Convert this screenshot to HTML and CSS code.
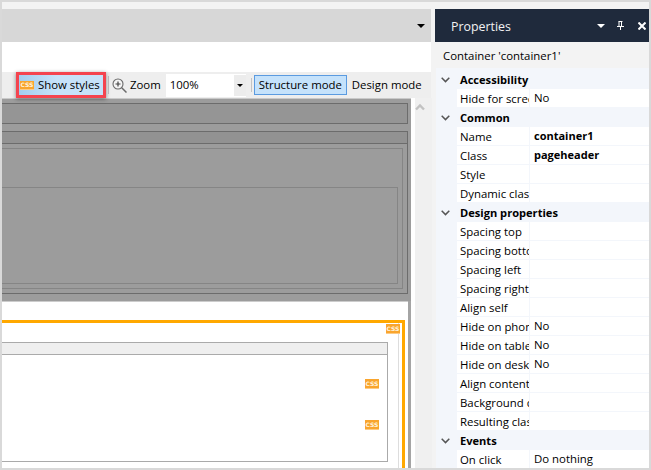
FILE: index.html
```html
<!DOCTYPE html>
<html lang="en">
<head>
<meta charset="utf-8">
<title>Show styles</title>
<link rel="stylesheet" href="styles.css">
</head>
<body>
<div class="frame">
  <main class="editor">
    <div class="strip"></div>
    <div class="tabs"><span class="caret"></span></div>
    <div class="blank"></div>
    <div class="toolbar">
      <div class="show-btn"><span class="css big">CSS</span><span class="tx">Show styles</span></div>
      <span class="sep"></span>
      <svg class="zoom-icon" width="15" height="15" viewBox="0 0 15 15"><circle cx="6" cy="6" r="5" fill="#f4f4f4" stroke="#6a6a6a" stroke-width="1.100"/><path d="M9.700 9.700 14.500 14.500" stroke="#6a6a6a" stroke-width="1.500"/><path d="M3.500 6h5M6 3.500v5" stroke="#444" stroke-width="1.200"/></svg>
      <span class="zoom-label tx">Zoom</span>
      <div class="combo"><span class="combo-val tx">100%</span><span class="combo-btn"><span class="caret small"></span></span></div>
      <span class="sep sep2"></span>
      <span class="mode active"><span class="tx">Structure mode</span></span>
      <span class="mode"><span class="tx">Design mode</span></span>
    </div>
    <div class="canvas-wrap">
      <div class="canvas">
        <div class="gray">
          <div class="gbox g1"></div>
          <div class="gbox g2">
            <div class="g2-head"></div>
            <div class="g3"><div class="g4"></div></div>
          </div>
        </div>
        <div class="page">
          <div class="orange">
            <span class="css tag tag-top">CSS</span>
            <div class="guide">
              <div class="inner">
                <div class="inner-head"></div>
                <div class="inner-body">
                  <span class="css tag">CSS</span>
                  <span class="css tag">CSS</span>
                </div>
              </div>
            </div>
          </div>
        </div>
      </div>
      <div class="scroll"><svg width="10" height="8" viewBox="0 0 10 8"><path d="M1 6.500 5 2.500l4 4" fill="none" stroke="#c2c2c2" stroke-width="2.400"/></svg></div>
    </div>
  </main>
  <aside class="panel">
    <header class="panel-head">
      <span class="panel-title">Properties</span>
      <span class="caret white"></span>
      <svg class="pin" width="7" height="9" viewBox="0 0 7 9"><path d="M1.500 0.500h4M2 0.500v4.500M4.500 0.500v4.500M0 5.500h7M3.500 5.500V9" fill="none" stroke="#fff" stroke-width="1"/></svg>
      <svg class="close" width="8" height="8" viewBox="0 0 8 8"><path d="M0.500 0.500l7 7M7.500 0.500l-7 7" stroke="#fff" stroke-width="2"/></svg>
    </header>
    <div class="panel-sub">Container 'container1'</div>
    <div class="grid">
      <div class="cat"><svg class="chev" width="9" height="6" viewBox="0 0 9 6"><path d="M0.700 0.800 4.500 4.600 8.300 0.800" fill="none" stroke="#555" stroke-width="1.500"/></svg>Accessibility</div>
      <div class="row"><span class="key">Hide for screen readers</span><span class="val">No</span></div>
      <div class="cat"><svg class="chev" width="9" height="6" viewBox="0 0 9 6"><path d="M0.700 0.800 4.500 4.600 8.300 0.800" fill="none" stroke="#555" stroke-width="1.500"/></svg>Common</div>
      <div class="row"><span class="key">Name</span><span class="val bold">container1</span></div>
      <div class="row"><span class="key">Class</span><span class="val bold">pageheader</span></div>
      <div class="row"><span class="key">Style</span><span class="val"></span></div>
      <div class="row"><span class="key">Dynamic classes</span><span class="val"></span></div>
      <div class="cat"><svg class="chev" width="9" height="6" viewBox="0 0 9 6"><path d="M0.700 0.800 4.500 4.600 8.300 0.800" fill="none" stroke="#555" stroke-width="1.500"/></svg>Design properties</div>
      <div class="row"><span class="key">Spacing top</span><span class="val"></span></div>
      <div class="row"><span class="key">Spacing bottom</span><span class="val"></span></div>
      <div class="row"><span class="key">Spacing left</span><span class="val"></span></div>
      <div class="row"><span class="key">Spacing right</span><span class="val"></span></div>
      <div class="row"><span class="key">Align self</span><span class="val"></span></div>
      <div class="row"><span class="key">Hide on phone</span><span class="val">No</span></div>
      <div class="row"><span class="key">Hide on tablet</span><span class="val">No</span></div>
      <div class="row"><span class="key">Hide on desktop</span><span class="val">No</span></div>
      <div class="row"><span class="key">Align content</span><span class="val"></span></div>
      <div class="row"><span class="key">Background color</span><span class="val"></span></div>
      <div class="row"><span class="key">Resulting classes</span><span class="val"></span></div>
      <div class="cat"><svg class="chev" width="9" height="6" viewBox="0 0 9 6"><path d="M0.700 0.800 4.500 4.600 8.300 0.800" fill="none" stroke="#555" stroke-width="1.500"/></svg>Events</div>
      <div class="row"><span class="key">On click</span><span class="val">Do nothing</span></div>
    </div>
  </aside>
</div>
</body>
</html>
```
FILE: styles.css
```css
* { box-sizing: border-box; }
html, body { margin: 0; padding: 0; }
body { width: 651px; height: 470px; overflow: hidden; font-family: "Open Sans", "Noto Sans", sans-serif; font-size: 11.4px; color: #000; }
.frame { width: 651px; height: 470px; border: 2px solid #d9d9d9; display: flex; background: #f3f3f3; overflow: hidden; }
.editor { width: 429px; flex: none; display: flex; flex-direction: column; height: 466px; }
.strip { height: 7px; flex: none; background: #f3f3f3; }
.tabs { height: 33px; flex: none; background: #d7d7d7; display: flex; align-items: center; justify-content: flex-end; padding-right: 6px; }
.caret { display: block; width: 0; height: 0; border-left: 4px solid transparent; border-right: 4px solid transparent; border-top: 4px solid #000; }
.blank { height: 30px; flex: none; background: #fff; }
.toolbar { height: 26px; flex: none; background: #eee; display: flex; align-items: center; padding-left: 14px; white-space: nowrap; }
.tx { padding-bottom: 2px; }
.show-btn { position: relative; width: 90px; height: 26px; background: linear-gradient(to right, #a3cdee, #c6e2f9 45%); border: 3px solid #f4444f; box-shadow: 0 1px 4px rgba(0,0,0,.45); display: flex; align-items: center; gap: 4px; padding-left: 1px; }
.css { display: inline-flex; align-items: center; justify-content: center; background: #f9a52e; border-bottom: 1px solid #fdcb85; color: #fff3dd; font-family: "DejaVu Sans", sans-serif; font-weight: 700; font-size: 6px; width: 14px; height: 9px; }
.big { flex: none; }
.sep { width: 1px; height: 18px; background: #c4c4c4; margin-left: 2px; }
.zoom-icon { margin-left: 3px; flex: none; }
.zoom-label { margin-left: 3px; }
.combo { margin-left: 5px; width: 80px; height: 23px; background: #fff; display: flex; align-items: center; justify-content: space-between; }
.combo-val { padding-left: 4px; }
.combo-btn { width: 12px; height: 21px; background: #ececec; display: flex; align-items: center; justify-content: center; }
.small { border-left-width: 3px; border-right-width: 3px; border-top-width: 3px; }
.sep2 { margin-left: 5px; margin-right: 2px; height: 14px; }
.mode { height: 20px; display: flex; align-items: center; padding: 0 5px; }
.mode.active { background: #c5e2fb; border: 1px solid #5b9be0; padding: 0 4px; width: 93px; justify-content: center; }
.canvas-wrap { flex: 1; min-height: 0; display: flex; background: #fff; }
.canvas { width: 409px; flex: none; display: flex; flex-direction: column; background: #a4a4a4; padding-right: 3px; margin-right: 4px; border-top: 1px solid #c9c9c9; }
.gray { height: 202px; flex: none; background: #9c9c9c; margin-right: -3px; padding: 4px 3px 0 0; display: flex; flex-direction: column; gap: 7px; }
.gbox { border: 1px solid #6c6c6c; border-left: 0; }
.g1 { height: 21px; flex: none; background: #959595; }
.g2 { height: 163px; flex: none; display: flex; flex-direction: column; padding: 0 4px 4px 0; }
.g2-head { height: 12px; flex: none; margin-right: -4px; background: #929292; border-bottom: 1px solid #6c6c6c; }
.g3 { flex: 1; margin-top: 4px; border: 1px solid #858585; border-left: 0; padding: 38px 4px 4px 0; display: flex; }
.g4 { flex: 1; border: 1px solid #858585; border-left: 0; }
.page { flex: 1; min-height: 0; background: #fff; border-top: 1px solid #ccc; padding: 18px 3px 0 0; overflow: hidden; }
.orange { height: 148px; position: relative; border: 3px solid #ffa800; border-width: 3px 3px 0 0; }
.guide { height: 100%; border-right: 1px solid #ddd; margin-right: 3px; padding: 19px 10px 0 0; }
.tag { width: 14px; height: 10px; }
.tag-top { position: absolute; top: 1px; right: 2px; }
.inner { height: 120px; border: 1px solid #aaa; border-left: 0; display: flex; flex-direction: column; }
.inner-head { height: 12px; background: #efefef; border-bottom: 1px solid #aaa; flex: none; }
.inner-body { flex: 1; display: flex; flex-direction: column; align-items: flex-end; padding: 24px 8px 0 0; gap: 31px; }
.scroll { flex: 1; background: #f0f0f0; display: flex; justify-content: center; padding: 5px 7px 0 0; }
.panel { margin-left: 4px; flex: 1; display: flex; flex-direction: column; padding-top: 7px; min-width: 0; }
.panel-head { height: 33px; background: #1f2a3c; color: #f2f2f2; display: flex; align-items: center; flex: none; padding: 0 3px 0 16px; }
.panel-title { font-size: 12.4px; flex: 1; padding-top: 2px; }
.white { border-top-color: #fff; }
.pin { margin-left: 12px; }
.close { margin-left: 14px; }
.panel-sub { height: 26px; padding-left: 8px; display: flex; align-items: center; flex: none; }
.grid { background: #f3f6fb; flex: 1; overflow: hidden; margin-left: 1px; padding-top: 2px; }
.cat { height: 19px; font-weight: 700; font-size: 11.1px; display: flex; align-items: center; padding-left: 5px; }
.chev { margin-right: 10px; flex: none; }
.row { height: 19px; margin-left: 21px; background: #fff; display: flex; border-bottom: 1px solid #f3f6fb; }
.key { width: 73px; flex: none; overflow: hidden; white-space: nowrap; padding: 0 1px 0 3px; border-right: 1px solid #f3f6fb; line-height: 20px; }
.val { padding-left: 4px; line-height: 18px; white-space: nowrap; }
.bold { font-weight: 700; font-size: 11px; }
```
